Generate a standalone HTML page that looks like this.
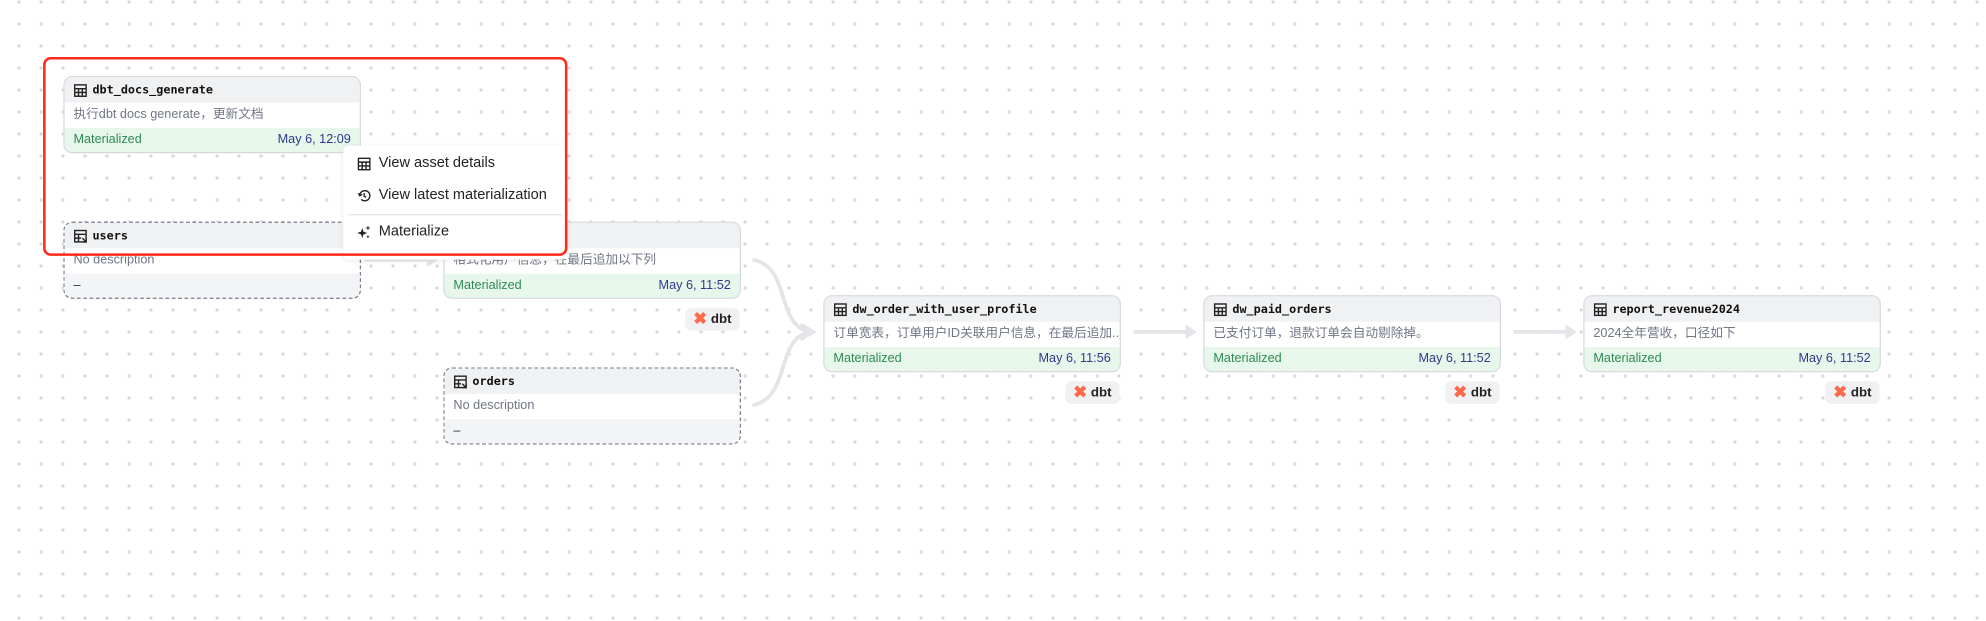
<!DOCTYPE html>
<html><head><meta charset="utf-8"><style>
html,body{margin:0;padding:0;}
body{width:1986px;height:621px;overflow:hidden;background-color:#fff;
background-image:radial-gradient(circle,#d6d6db 1.4px,transparent 1.8px);
background-size:22px 22px;background-position:8px -9px;position:relative;}
#s{position:absolute;left:0;top:0;width:1568px;height:490px;transform:scale(1.26658);transform-origin:0 0;font-family:"Liberation Sans","Noto Sans CJK SC",sans-serif;}
.n{position:absolute;width:233px;height:59px;border:1.5px solid #d7d9de;border-radius:7px;overflow:hidden;background:#fff;}
.n.d{border:1.5px dashed #747a8a;}
.h{height:20px;background:#f0f1f3;display:flex;align-items:center;padding-left:7px;font-family:"DejaVu Sans Mono","Liberation Mono",monospace;font-weight:bold;font-size:9.3px;color:#111;}
.h svg{margin-right:4px}
.ds{height:20px;line-height:20px;padding-left:7px;font-size:10px;color:#707684;white-space:nowrap;overflow:hidden;}
.f{height:19px;background:#e7f7ec;display:flex;justify-content:space-between;align-items:center;padding:0 7px;font-size:10px;}
.f .a{color:#2f8a52}.f .b{color:#2e3a8c}
.f.g{background:#f3f4f6;color:#333}
.badge{position:absolute;width:43px;height:18px;background:#f1f1f3;border-radius:5px;display:flex;align-items:center;justify-content:center;font-size:10.5px;font-weight:bold;color:#222;}
.badge b{color:#ff694a;font-size:13px;margin-right:3px}
.menu{position:absolute;left:271px;top:115px;width:177px;height:90px;background:#fff;box-shadow:0 1px 4px rgba(0,0,0,.08);border-radius:4px;font-size:11.5px;color:#222;}
.mi{position:absolute;left:11px;display:flex;align-items:center;}
.mi svg{margin-right:6px}
.red{position:absolute;left:34px;top:45px;width:410px;height:153px;border:2px solid #ff2a1a;border-radius:6px;}
</style></head><body><div id="s">
<svg width="1568" height="490" style="position:absolute;left:0;top:0" fill="none" stroke="#e4e5e8" stroke-width="3">
<path d="M288 205 L340 205"/><path d="M337 199 L346 205 L337 211" fill="#e4e5e8" stroke="none"/>
<path d="M594 205 C625 210,612 258,640 262"/><path d="M594 320 C625 314,612 266,640 262"/>
<path d="M632 256 L642 262 L632 268" stroke-width="3"/>
<path d="M895 262 L938 262"/><path d="M936 256 L945 262 L936 268" fill="#e4e5e8" stroke="none"/>
<path d="M1195 262 L1238 262"/><path d="M1236 256 L1245 262 L1236 268" fill="#e4e5e8" stroke="none"/>
</svg>
<svg width="0" height="0" style="position:absolute"><defs>
<g id="tb" fill="none" stroke="#222" stroke-width="1.1"><rect x="1" y="1" width="9" height="9"/><path d="M1 4h9M1 7h9M4 4v6M7 4v6"/></g>
<g id="tv" fill="none" stroke="#222" stroke-width="1.1"><rect x="1" y="1" width="9" height="9"/><path d="M1 4h9M1 7h5M4 4v6M7 7l3 3M10 7v3h-3"/></g>
</defs></svg>

<div class="n" style="left:50px;top:60px"><div class="h"><svg width="11" height="11"><use href="#tb"/></svg>dbt_docs_generate</div><div class="ds">执行dbt docs generate，更新文档</div><div class="f"><span class="a">Materialized</span><span class="b">May 6, 12:09</span></div></div>
<div class="n d" style="left:50px;top:175px"><div class="h"><svg width="11" height="11"><use href="#tv"/></svg>users</div><div class="ds">No description</div><div class="f g"><span>–</span></div></div>
<div class="n" style="left:350px;top:175px"><div class="h"></div><div class="ds">格式化用户信息，在最后追加以下列</div><div class="f"><span class="a">Materialized</span><span class="b">May 6, 11:52</span></div></div>
<div class="badge" style="left:541px;top:243px"><b>✖</b>dbt</div>
<div class="n d" style="left:350px;top:290px"><div class="h"><svg width="11" height="11"><use href="#tv"/></svg>orders</div><div class="ds">No description</div><div class="f g"><span>–</span></div></div>
<div class="n" style="left:650px;top:233px"><div class="h"><svg width="11" height="11"><use href="#tb"/></svg>dw_order_with_user_profile</div><div class="ds">订单宽表，订单用户ID关联用户信息，在最后追加...</div><div class="f"><span class="a">Materialized</span><span class="b">May 6, 11:56</span></div></div>
<div class="badge" style="left:841px;top:301px"><b>✖</b>dbt</div>
<div class="n" style="left:950px;top:233px"><div class="h"><svg width="11" height="11"><use href="#tb"/></svg>dw_paid_orders</div><div class="ds">已支付订单，退款订单会自动剔除掉。</div><div class="f"><span class="a">Materialized</span><span class="b">May 6, 11:52</span></div></div>
<div class="badge" style="left:1141px;top:301px"><b>✖</b>dbt</div>
<div class="n" style="left:1250px;top:233px"><div class="h"><svg width="11" height="11"><use href="#tb"/></svg>report_revenue2024</div><div class="ds">2024全年营收，口径如下</div><div class="f"><span class="a">Materialized</span><span class="b">May 6, 11:52</span></div></div>
<div class="badge" style="left:1441px;top:301px"><b>✖</b>dbt</div>

<div class="menu">
<div class="mi" style="top:8px"><svg width="11" height="11"><use href="#tb"/></svg>View asset details</div>
<div class="mi" style="top:33px"><svg width="11" height="11" fill="none" stroke="#222" stroke-width="1.1"><path d="M2 5.5a4 4 0 1 1 1.2 2.9"/><path d="M1 3.5l1 2 2-1"/><path d="M5.5 3.5v2.3l1.6 1"/></svg>View latest materialization</div>
<div style="position:absolute;left:4px;right:4px;top:54px;border-top:1px solid #e6e6e8"></div>
<div class="mi" style="top:62px"><svg width="11" height="11" fill="#222"><path d="M4 2l1 3 3 1-3 1-1 3-1-3-3-1 3-1z"/><path d="M8.5 0l.5 1.5 1.5.5-1.5.5-.5 1.5-.5-1.5-1.5-.5 1.5-.5z"/><path d="M8.5 7.5l.4 1 1 .4-1 .4-.4 1-.4-1-1-.4 1-.4z"/></svg>Materialize</div>
</div>
<div class="red"></div>
</div></body></html>
